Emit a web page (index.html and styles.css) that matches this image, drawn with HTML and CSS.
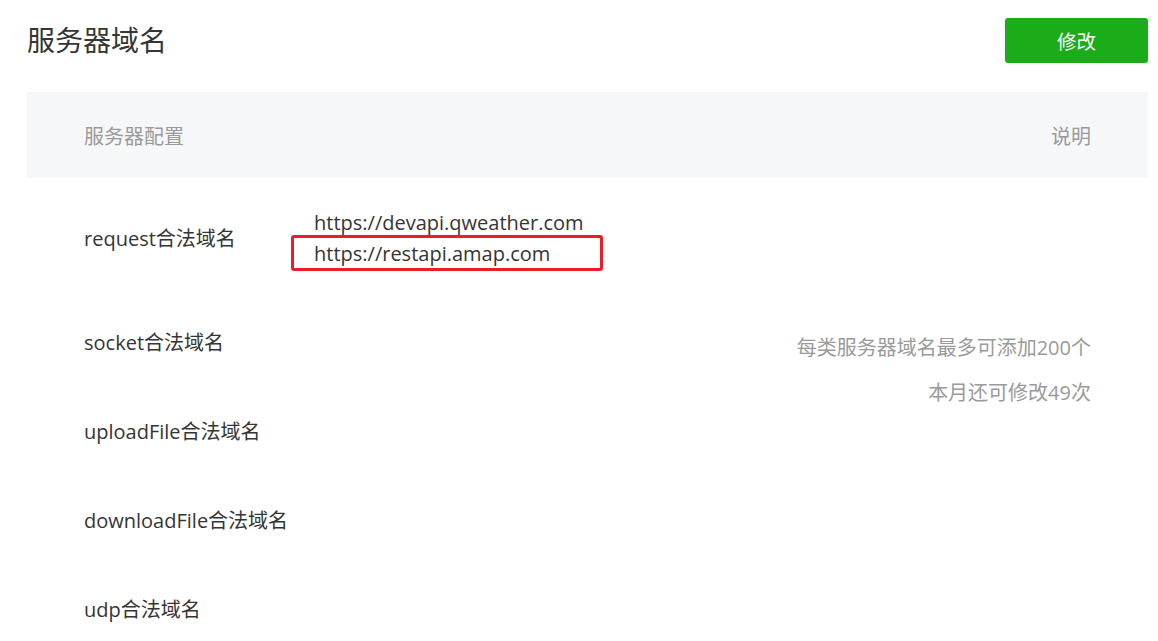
FILE: index.html
```html
<!DOCTYPE html>
<html lang="zh-CN">
<head>
<meta charset="utf-8">
<title>服务器域名</title>
<link rel="stylesheet" href="styles.css">
</head>
<body>
<div class="page">
  <div class="head">
    <h2 class="title">服务器域名</h2>
    <button class="btn">修改</button>
  </div>
  <div class="table">
    <div class="thead">
      <span>服务器配置</span>
      <span>说明</span>
    </div>
    <div class="tbody">
      <div class="label r1">request合法域名</div>
      <div class="value r1">
        <div>https://devapi.qweather.com</div>
        <div class="marked">https://restapi.amap.com<span class="mark"></span></div>
      </div>
      <div class="notes">
        <p>每类服务器域名最多可添加200个</p>
        <p>本月还可修改49次</p>
      </div>
      <div class="label r2">socket合法域名</div>
      <div class="value r2"></div>
      <div class="label r3">uploadFile合法域名</div>
      <div class="value r3"></div>
      <div class="label r4">downloadFile合法域名</div>
      <div class="value r4"></div>
      <div class="label r5">udp合法域名</div>
      <div class="value r5"></div>
    </div>
  </div>
</div>
</body>
</html>
```
FILE: styles.css
```css
html, body {
  margin: 0;
  padding: 0;
  background: #fff;
}
body {
  font-family: "Open Sans", "Noto Sans CJK SC", sans-serif;
  color: #353535;
  font-size: 20px;
}
.page {
  padding: 18px 10px 0 27px;
}
.head {
  display: flex;
  justify-content: space-between;
  align-items: center;
  height: 45px;
  margin-bottom: 29px;
}
.title {
  margin: 0;
  font-weight: normal;
  font-size: 28px;
  line-height: 45px;
  color: #353535;
}
.btn {
  width: 143px;
  height: 45px;
  border: 0;
  border-radius: 3px;
  background: #1aad19;
  color: #fff;
  font-family: inherit;
  font-size: 19.5px;
  padding: 0;
}
.thead {
  display: flex;
  justify-content: space-between;
  align-items: center;
  height: 86px;
  padding: 0 57px;
  background: #f6f7f9;
  color: #9a9a9a;
}
.tbody {
  display: grid;
  grid-template-columns: 230px 1fr auto;
  padding: 0 57px;
  line-height: 31px;
}
.label, .value {
  padding: 29px 0;
}
.r1 { grid-row: 1; }
.r2 { grid-row: 2; }
.r3 { grid-row: 3; }
.r4 { grid-row: 4; }
.r5 { grid-row: 5; }
.label { grid-column: 1; align-self: center; }
.value { grid-column: 2; }
.r1.label { padding: 0; }
.notes {
  grid-column: 3;
  grid-row: 1 / 5;
  align-self: center;
  text-align: right;
  color: #9a9a9a;
  display: flex;
  flex-direction: column;
  gap: 14px;
  align-items: flex-end;
  margin-top: -3px;
}
.notes p { margin: 0; }
.marked {
  position: relative;
}
.mark {
  position: absolute;
  left: -23px;
  top: -3px;
  width: 312px;
  height: 36px;
  box-sizing: border-box;
  border: 3px solid #ee1c24;
  border-radius: 3px;
}
```
